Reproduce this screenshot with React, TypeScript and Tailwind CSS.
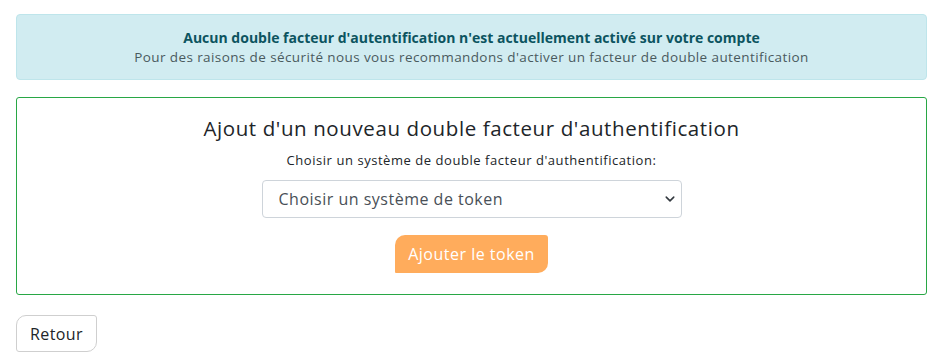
export default function App() {
  return (
    <div className="min-h-[364px] bg-white px-4 pt-[14px] font-['Open_Sans',sans-serif]">
      <div className="rounded border border-[#bee5eb] bg-[#d1ecf1] px-5 pb-[13px] pt-[12px] text-center text-[#0c5460]">
        <div className="text-[14px] font-bold leading-[21px]">
          Aucun double facteur d'autentification n'est actuellement activé sur votre compte
        </div>
        <div className="text-[13.5px] leading-[18px] tracking-[0.4px] text-[#4a5a5e]">
          Pour des raisons de sécurité nous vous recommandons d'activer un facteur de double autentification
        </div>
      </div>

      <div className="mt-[17px] flex h-[198px] flex-col items-center rounded-[3px] border border-[#28a745] pt-[16px]">
        <h2 className="text-[20.5px] leading-[28px] tracking-[0.6px] text-[#212529]">
          Ajout d'un nouveau double facteur d'authentification
        </h2>
        <label className="mt-[9px] text-[13px] leading-[18px] tracking-[0.55px] text-[#212529]">
          Choisir un système de double facteur d'authentification:
        </label>
        <div className="relative mt-[11px] w-[420px]">
          <select className="h-[38px] w-full appearance-none rounded border border-[#ced4da] bg-white pl-4 pr-8 text-[16px] tracking-[0.5px] text-[#495057] outline-none">
            <option>Choisir un système de token</option>
          </select>
          <svg
            className="pointer-events-none absolute right-[7px] top-[14px]"
            width="10"
            height="10"
            viewBox="0 0 16 16"
          >
            <path d="M2 5l6 6 6-6" fill="none" stroke="#343a40" strokeWidth="2.5" strokeLinecap="round" strokeLinejoin="round" />
          </svg>
        </div>
        <button className="mt-[17px] h-[38px] rounded-br-[10px] rounded-tl-[10px] rounded-tr-[3px] rounded-bl-[1px] bg-[#ffac5c] px-[13px] text-[16px] tracking-[0.5px] text-white">
          Ajouter le token
        </button>
      </div>

      <button className="mt-[20px] h-[37px] rounded-br-[10px] rounded-tl-[10px] rounded-tr-[3px] rounded-bl-[3px] border border-[#cfcfcf] bg-white px-[13px] text-[16px] tracking-[0.4px] text-[#212529]">
        Retour
      </button>
    </div>
  );
}
